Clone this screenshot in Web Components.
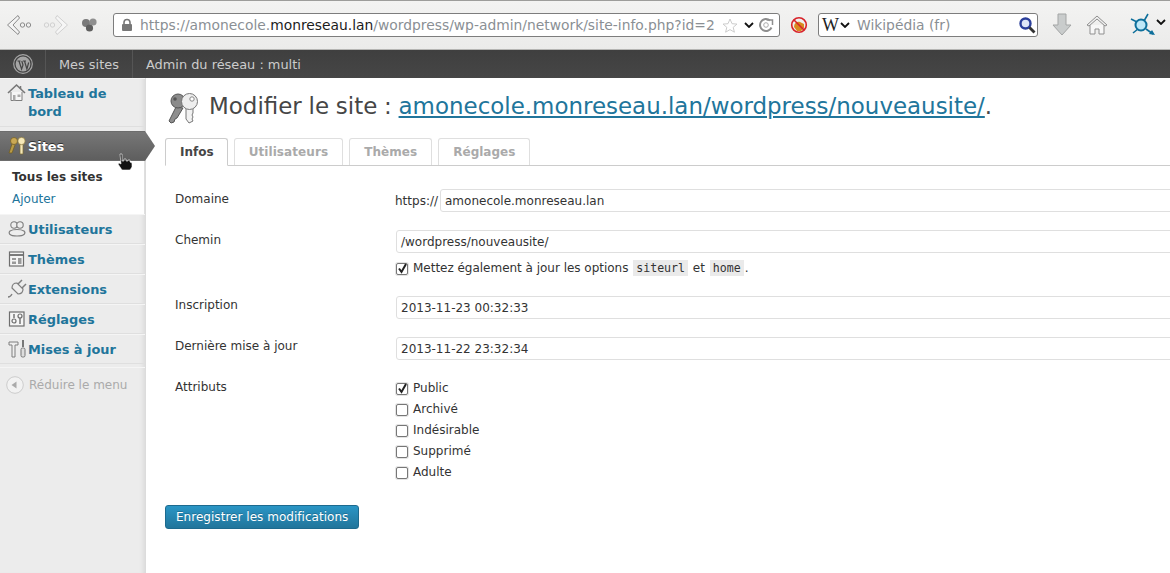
<!DOCTYPE html>
<html lang="fr">
<head>
<meta charset="utf-8">
<title>Modifier le site</title>
<style>
  html, body { margin: 0; height: 573px; overflow: hidden; background: #fff; }
  body { font-family: "DejaVu Sans", sans-serif; font-size: 12px; color: #333; display: flex; flex-direction: column; }
</style>
</head>
<body>
<browser-toolbar></browser-toolbar>
<wp-adminbar></wp-adminbar>
<wp-shell>
  <wp-sidebar slot="side"></wp-sidebar>
  <site-form></site-form>
</wp-shell>

<script>
class BrowserToolbar extends HTMLElement {
    constructor() {
        super();
        this.attachShadow({mode: 'open'});
    }

    connectedCallback() {
        this.shadowRoot.innerHTML = `
        <style>
            :host {
                display: flex;
                align-items: center;
                height: 50px;
                flex: none;
                box-sizing: border-box;
                border-top: 1px solid #9d9d9b;
                border-bottom: 1px solid #b5b5b3;
                background: linear-gradient(#f3f3f2, #ebebea);
                padding: 0 0 0 6px;
                font-family: "DejaVu Sans", sans-serif;
                overflow: hidden;
                position: relative;
            }
            /* onglet actif, au dessus de la barre */
            :host::before {
                content: "";
                position: absolute;
                left: 990px;
                top: -1px;
                width: 98px;
                height: 1px;
                background: #f3f3f2;
            }
            svg { display: block; flex: none; }
            .url, .search {
                display: flex;
                align-items: center;
                height: 24px;
                box-sizing: border-box;
                background: #fff;
                border: 1px solid #7d7d7d;
                border-radius: 3px;
                font-size: 13.850px;
                white-space: nowrap;
                overflow: hidden;
                flex: none;
            }
            .url { width: 667px; margin-left: 15px; padding-left: 7px; color: #8a8f94; }
            .url b { font-weight: normal; color: #1c1c1c; }
            .url span.t { margin-left: 7px; }
            .url .end { margin-left: auto; display: flex; align-items: center; gap: 4px; padding-right: 5px; background: #fff; }
            .search { width: 220px; margin-left: 10px; padding-left: 3px; color: #8a8f94; }
            .search .w { font: 18px "Liberation Serif", serif; color: #222; width: 18px; }
            .search .t { margin-left: 7px; }
            .search svg:last-child { margin-left: auto; margin-right: 1px; }
        </style>
        <svg width="28" height="26" viewBox="0 0 28 26" fill="none"><path d="M12 3.500 1.500 13 12 22.500l1.500-2.500L7 13l6.500-7z" fill="#f4f4f4" stroke="#8b8b8b"/><circle cx="16.500" cy="13" r="2.200" stroke="#8b8b8b"/><circle cx="22.500" cy="13" r="2.200" stroke="#8b8b8b"/></svg>
        <svg width="28" height="26" viewBox="0 0 28 26" fill="none" style="margin-left:9px"><path d="M14 3.500 24.500 13 14 22.500 12.500 20 19 13 12.500 6z" fill="#f6f6f6" stroke="#d0d0d0"/><circle cx="9.500" cy="13" r="2.200" stroke="#d0d0d0"/><circle cx="3.500" cy="13" r="2.200" stroke="#d0d0d0"/></svg>
        <svg width="18" height="18" viewBox="0 0 18 18" style="margin-left:9px"><circle cx="6" cy="7" r="4" fill="#7a7a7a"/><circle cx="13" cy="6" r="3.600" fill="#8f8f8f"/><circle cx="9.500" cy="12" r="3.600" fill="#5f5f5f"/></svg>
        <div class="url">
            <svg width="12" height="14" viewBox="0 0 12 14"><path d="M3 6V4.500a3 3 0 0 1 6 0V6" fill="none" stroke="#777" stroke-width="1.600"/><rect x="1" y="6" width="10" height="7" rx="1" fill="#777"/></svg>
            <span class="t">https://amonecole.<b>monreseau.lan</b>/wordpress/wp-admin/network/site-info.php?id=2</span>
            <span class="end">
                <svg width="16" height="15" viewBox="0 0 16 15" style="margin-right:2px"><path d="M8 1l2 4.700 5 .4-3.800 3.200 1.200 4.900L8 11.600 3.600 14.200l1.200-4.900L1 6.100l5-.4z" fill="#fff" stroke="#ccc"/></svg>
                <svg width="10" height="6" viewBox="0 0 10 6"><path d="M1 1l4 4 4-4" fill="none" stroke="#111" stroke-width="1.800"/></svg>
                <svg width="16" height="16" viewBox="0 0 16 16" fill="none"><path d="M13.500 10.500a6 6 0 1 1-1.500-7" stroke="#8e8e8e" stroke-width="2"/><path d="M8.500 3h6v5" stroke="#8e8e8e" stroke-width="1.500"/><circle cx="8" cy="8" r="2.300" stroke="#aaa"/></svg>
            </span>
        </div>
        <svg width="18" height="18" viewBox="0 0 18 18" style="margin-left:10px"><path d="M4 11c0-4 3-6 6-5l4 2 0 4-3 3H7z" fill="#d98a20"/><circle cx="9" cy="9" r="7.300" fill="none" stroke="#d8232a" stroke-width="1.600"/><path d="M4 4l10 10" stroke="#d8232a" stroke-width="1.600"/></svg>
        <div class="search">
            <span class="w">W</span>
            <svg width="10" height="6" viewBox="0 0 10 6"><path d="M1 1l4 4 4-4" fill="none" stroke="#111" stroke-width="1.800"/></svg>
            <span class="t">Wikipédia (fr)</span>
            <svg width="18" height="18" viewBox="0 0 18 18"><circle cx="7.500" cy="7.500" r="5" fill="#dfe6f7" stroke="#2b3f9a" stroke-width="2.400"/><path d="M11.500 11.500l5 5" stroke="#333" stroke-width="2.800"/></svg>
        </div>
        <svg width="20" height="24" viewBox="0 0 20 24" style="margin-left:14px"><path d="M6 1h8v11h5L10 22 1 12h5z" fill="#c9cccc" stroke="#a3a5a5"/></svg>
        <svg width="22" height="22" viewBox="0 0 22 22" fill="none" style="margin-left:14px"><path d="M1 11 11 2l10 9-2 1-8-7-8 7z" fill="#eee" stroke="#8f8f8f"/><path d="M4 11v9h5v-5h4v5h5v-9" fill="#f7f7f7" stroke="#8f8f8f"/></svg>
        <svg width="26" height="24" viewBox="0 0 26 24" fill="none" style="margin-left:22px"><path d="M1 6l6 3M3 20l5-4M18 1l-4 7M23 21l-7-5" stroke="#0d6f9b" stroke-width="1.600"/><circle cx="11" cy="12" r="5.500" fill="#bfe8f8" stroke="#0d6f9b" stroke-width="2"/><path d="M25 22l-6-1 3-4z" fill="#0d6f9b"/></svg>
        <svg width="10" height="6" viewBox="0 0 10 6" style="margin:0 0 6px 0"><path d="M1 1l4 4 4-4" fill="none" stroke="#111" stroke-width="1.800"/></svg>
        `;
    }
}

class WpAdminbar extends HTMLElement {
    constructor() {
        super();
        this.attachShadow({mode: 'open'});
    }

    connectedCallback() {
        this.shadowRoot.innerHTML = `
        <style>
            :host {
                display: flex;
                height: 28px;
                flex: none;
                background: linear-gradient(#3f3f3f, #464646);
                color: #ccc;
                font: 12.900px/29px "DejaVu Sans", sans-serif;
            }
            div { padding: 0 13px; border-right: 1px solid #555; box-sizing: border-box; }
            .logo { width: 46px; padding: 4px 0 0 13px; }
            .last { border: 0; }
            svg { display: block; }
        </style>
        <div class="logo">
            <svg width="20" height="20" viewBox="0 0 20 20" fill="none"><circle cx="10" cy="10" r="9.300" stroke="#a5a5a5" stroke-width="1.200"/><circle cx="10" cy="10" r="7.400" fill="#a5a5a5"/><path d="M4.500 7h3M6 7l2.600 8L10 11 8.800 7M10 7h3M11.500 7l2.400 8 1.800-6.500" stroke="#444" stroke-width="1.200"/></svg>
        </div>
        <div style="width:87px">Mes sites</div>
        <div class="last">Admin du réseau : multi</div>
        `;
    }
}

class WpShell extends HTMLElement {
    constructor() {
        super();
        this.attachShadow({mode: 'open'});
    }

    connectedCallback() {
        this.shadowRoot.innerHTML = `
        <style>
            :host { display: flex; flex: 1; min-height: 0; }
            .side { display: block; flex: none; width: 146px; }
            .main { display: block; flex: 1; min-width: 0; overflow: hidden; }
        </style>
        <div class="side"><slot name="side"></slot></div>
        <div class="main"><slot></slot></div>
        `;
    }
}

const ICONS = {
    home: '<path d="M1 10 9.500 2 18 10" fill="none" stroke="#777" stroke-width="1.600"/><path d="M13.500 3v3" stroke="#777" stroke-width="1.500"/><path d="M4 9v8.500h11V9" fill="#f6f6f6" stroke="#7e7e7e"/><path d="M6 12h2.500v5.500H6zM10.500 11.500h3V14h-3z" fill="#aaa"/>',
    keys: '<path d="M5 8 2 17h3l3-8" fill="#b89a45" stroke="#6e5a20" stroke-width=".7"/><circle cx="7" cy="5" r="3.500" fill="#caa955" stroke="#6e5a20" stroke-width=".7"/><path d="M13 8v10h3V8" fill="#f5e8b8" stroke="#7d6a30" stroke-width=".7"/><circle cx="14.500" cy="5" r="3.700" fill="#f5e8b8" stroke="#7d6a30" stroke-width=".7"/>',
    users: '<circle cx="7" cy="6" r="3.200" fill="#eee" stroke="#7e7e7e" stroke-width="1.100"/><circle cx="13" cy="6" r="3.200" fill="#eee" stroke="#7e7e7e" stroke-width="1.100"/><path d="M3 12c3-2 11-2 14 0 2 2 1 5-7 5s-9-3-7-5z" fill="#eee" stroke="#7e7e7e" stroke-width="1.100"/>',
    themes: '<rect x="2.500" y="3" width="14" height="14" fill="#f4f4f4" stroke="#6e6e6e" stroke-width="1.200"/><path d="M2.500 6h14" stroke="#6e6e6e" stroke-width="1.800"/><path d="M5 9h4v2H5zM5 12.500h4v2.500H5zM11 9h3.500v6H11z" fill="#999"/>',
    plugins: '<path d="M1 18c2 0 3-1 4-3" fill="none" stroke="#7e7e7e" stroke-width="1.300"/><path d="M5 9l6 6c3 0 5-2 5-5l-6-6C7 4 5 6 5 9z" fill="#eee" stroke="#7e7e7e" stroke-width="1.200"/><path d="M11 5l4-4M15 9l4-4" stroke="#7e7e7e" stroke-width="1.500"/>',
    settings: '<rect x="2.500" y="3" width="14.500" height="14" fill="#f6f6f6" stroke="#6e6e6e" stroke-width="1.200"/><path d="M7 5v4M13 9v6" stroke="#6e6e6e" stroke-width="1.400"/><circle cx="7" cy="12" r="2" fill="none" stroke="#6e6e6e" stroke-width="1.200"/><circle cx="13" cy="7" r="2" fill="none" stroke="#6e6e6e" stroke-width="1.200"/>',
    tools: '<path d="M2 3h9v3H8v12H5V6H2z" fill="#eee" stroke="#7e7e7e"/><path d="M16 1v7" stroke="#777" stroke-width="2"/><rect x="14" y="9" width="4" height="9" rx="1.500" fill="#ddd" stroke="#777"/>'
};

class WpMenuItem extends HTMLElement {
    constructor() {
        super();
        this.attachShadow({mode: 'open'});
    }

    connectedCallback() {
        const icon = this.getAttribute('icon');
        this.shadowRoot.innerHTML = `
        <style>
            :host {
                display: flex;
                box-sizing: border-box;
                min-height: 30px;
                padding: 6px 4px 0 7px;
                border-top: 1px solid #f5f5f5;
                border-bottom: 1px solid #dfdfdf;
                color: #21759b;
                font: bold 12.900px/18px "DejaVu Sans", sans-serif;
                position: relative;
            }
            :host([current]) {
                background: linear-gradient(#777, #5e5e5e);
                color: #fff;
                border-color: #6d6d6d;
                text-shadow: 0 -1px 0 #333;
            }
            :host([current])::after {
                content: "";
                position: absolute;
                left: 100%;
                top: -1px;
                bottom: -1px;
                width: 10px;
                background: linear-gradient(#777, #5e5e5e);
                clip-path: polygon(0 0, 100% 50%, 0 100%);
            }
            svg { flex: none; width: 20px; height: 20px; margin: -2px 1px 0 0; }
        </style>
        <svg viewBox="0 0 20 20">${ICONS[icon]}</svg>
        <span><slot></slot></span>
        `;
    }
}

class WpSidebar extends HTMLElement {
    constructor() {
        super();
        this.attachShadow({mode: 'open'});
    }

    connectedCallback() {
        this.shadowRoot.innerHTML = `
        <style>
            :host {
                display: block;
                height: 495px;
                width: 146px;
                box-sizing: border-box;
                background: #ececec;
                border-right: 1px solid #dcdcdc;
                box-shadow: inset -5px 0 5px -4px #d5d5d5;
                font-family: "DejaVu Sans", sans-serif;
            }
            .dash { min-height: 49px; margin-bottom: 4px; padding-top: 6px; }
            .sub { background: #fff; padding: 5px 0 4px 12px; font-size: 12px; line-height: 22px; color: #21759b; margin-right: 1px; position: relative; }
            .sub b { display: block; color: #333; }
            .collapse {
                display: flex;
                align-items: center;
                gap: 5px;
                margin-top: 3px;
                border-top: 1px solid #f5f5f5;
                padding: 8px 0 0 6px;
                color: #aaa;
                font-size: 12px;
            }
            .cursor { position: absolute; left: 117px; top: -8px; }
        </style>
        <wp-menu-item icon="home" class="dash">Tableau de bord</wp-menu-item>
        <wp-menu-item icon="keys" current>Sites</wp-menu-item>
        <div class="sub">
            <svg class="cursor" width="16" height="18" viewBox="0 0 16 18"><path d="M3 1h2v7h2V6h2v2h2V7h2v2l2 1v4l-2 3H5L1 11l1-1 2 1z" fill="#111" stroke="#fff" stroke-width=".6"/></svg>
            <b>Tous les sites</b>Ajouter
        </div>
        <wp-menu-item icon="users">Utilisateurs</wp-menu-item>
        <wp-menu-item icon="themes">Thèmes</wp-menu-item>
        <wp-menu-item icon="plugins">Extensions</wp-menu-item>
        <wp-menu-item icon="settings">Réglages</wp-menu-item>
        <wp-menu-item icon="tools">Mises à jour</wp-menu-item>
        <div class="collapse">
            <svg width="18" height="18" viewBox="0 0 18 18"><circle cx="9" cy="9" r="8.300" fill="#f2f2f2" stroke="#ccc"/><path d="M5.500 9l5-3.500v7z" fill="#aaa"/></svg>
            Réduire le menu
        </div>
        `;
    }
}

class FormRow extends HTMLElement {
    constructor() {
        super();
        this.attachShadow({mode: 'open'});
    }

    connectedCallback() {
        this.shadowRoot.innerHTML = `
        <style>
            :host { display: flex; padding: 0 0 18px 10px; font: 12px/16px "DejaVu Sans", sans-serif; color: #333; }
            .label { flex: none; width: 220px; padding-top: 2px; }
            :host([tight]) .label { padding-top: 1px; }
            .field { flex: none; width: 800px; }
        </style>
        <div class="label"><slot name="label"></slot></div>
        <div class="field"><slot></slot></div>
        `;
    }
}

class TextBox extends HTMLElement {
    constructor() {
        super();
        this.attachShadow({mode: 'open'});
    }

    connectedCallback() {
        this.shadowRoot.innerHTML = `
        <style>
            :host {
                display: block;
                box-sizing: border-box;
                height: 23px;
                width: 800px;
                flex: none;
                margin-left: 1px;
                border: 1px solid #dfdfdf;
                border-radius: 3px;
                padding: 0 4px;
                background: #fff;
                font: 12px/22px "DejaVu Sans", sans-serif;
                color: #333;
                white-space: nowrap;
            }
        </style>
        <slot></slot>
        `;
    }
}

class CheckLine extends HTMLElement {
    constructor() {
        super();
        this.attachShadow({mode: 'open'});
    }

    connectedCallback() {
        const on = this.hasAttribute('checked');
        this.shadowRoot.innerHTML = `
        <style>
            :host { display: flex; align-items: center; height: 21px; gap: 5px; margin-left: 1px; font: 12px/21px "DejaVu Sans", sans-serif; color: #333; white-space: pre; }
            .box { flex: none; width: 12px; height: 12px; box-sizing: border-box; border: 1px solid #777; border-radius: 2px; background: #fff; box-shadow: 0 0 0 1px #e4e4e4; }
            svg { display: block; margin: -2px 0 0 -1px; }
        </style>
        <div class="box">${on ? '<svg width="13" height="13" viewBox="0 0 13 13"><path d="M3 6.500l2.500 3.500L10 2" fill="none" stroke="#222" stroke-width="2"/></svg>' : ''}</div>
        <span><slot></slot></span>
        `;
    }
}

class SiteForm extends HTMLElement {
    constructor() {
        super();
        this.attachShadow({mode: 'open'});
    }

    connectedCallback() {
        this.shadowRoot.innerHTML = `
        <style>
            :host { display: block; padding-left: 19px; font-family: "DejaVu Sans", sans-serif; color: #333; overflow: hidden; }
            .head { display: flex; align-items: center; gap: 10px; height: 60px; box-sizing: border-box; padding: 0 0 4px 3px; font-size: 22.950px; word-spacing: -.5px; color: #464646; white-space: nowrap; }
            .head svg { flex: none; margin-top: 5px; }
            a { color: #21759b; text-decoration: underline; }
            .tabs { display: flex; gap: 6px; height: 28px; box-sizing: border-box; border-bottom: 1px solid #ccc; font: bold 12px/26px "DejaVu Sans", sans-serif; color: #aaa; }
            .tabs div { height: 27px; box-sizing: border-box; border: 1px solid #dfdfdf; border-bottom: 0; border-radius: 3px 3px 0 0; padding: 0 14px; letter-spacing: .08px; }
            .tabs .on { background: #fff; border-color: #ccc; color: #464646; height: 28px; border-bottom: 1px solid #fff; padding-right: 13px; letter-spacing: 0; }
            .tabs .end { letter-spacing: 0; }
            .rows { padding-top: 23px; }
            .inline { display: flex; align-items: center; }
            .inline text-box { margin-left: 2px; }
            code { font: 11.600px/16px "DejaVu Sans Mono", monospace; background: #eaeaea; padding: 1px 3px; margin: 0 1px; letter-spacing: 0; }
            .mettez { margin-top: 5px; margin-bottom: -1px; letter-spacing: -.02px; }
            .btn {
                display: inline-block;
                margin-top: 4px;
                height: 24px;
                box-sizing: border-box;
                padding: 0 10px;
                border: 1px solid #1d6a8e;
                border-radius: 3px;
                background: linear-gradient(#2a95c5, #21759b);
                color: #fff;
                font: 12px/22px "DejaVu Sans", sans-serif;
                letter-spacing: .03px;
                text-shadow: 0 -1px 0 rgba(0,0,0,.2);
            }
        </style>
        <div class="head">
            <svg width="31" height="31" viewBox="0 0 31 31">
                <path d="M8 14 1 28l2 2 3-1 1-3 2-1 6-10z" fill="#8e8e8e" stroke="#555"/>
                <circle cx="10" cy="8" r="7" fill="#8b8b8b" stroke="#555"/>
                <circle cx="7" cy="6" r="1.800" fill="#555"/>
                <path d="M18 14v12l3 4 4-2-1-2 1-2-1-2 1-2v-6z" fill="#f2f2f2" stroke="#777"/>
                <circle cx="21.500" cy="8.500" r="8" fill="#eee" stroke="#777"/>
                <circle cx="24" cy="6" r="2.200" fill="#fff" stroke="#888"/>
            </svg>
            <span>Modifier le site : <a>amonecole.monreseau.lan/wordpress/nouveausite/</a>.</span>
        </div>
        <div class="tabs">
            <div class="on">Infos</div>
            <div>Utilisateurs</div>
            <div>Thèmes</div>
            <div class="end">Réglages</div>
        </div>
        <div class="rows">
            <form-row>
                <span slot="label">Domaine</span>
                <div class="inline">https://<text-box>amonecole.monreseau.lan</text-box></div>
            </form-row>
            <form-row>
                <span slot="label">Chemin</span>
                <text-box>/wordpress/nouveausite/</text-box>
                <check-line checked class="mettez">Mettez également à jour les options <code>siteurl</code> et <code>home</code>.</check-line>
            </form-row>
            <form-row tight>
                <span slot="label">Inscription</span>
                <text-box>2013-11-23 00:32:33</text-box>
            </form-row>
            <form-row tight>
                <span slot="label">Dernière mise à jour</span>
                <text-box>2013-11-22 23:32:34</text-box>
            </form-row>
            <form-row tight>
                <span slot="label">Attributs</span>
                <check-line checked>Public</check-line>
                <check-line>Archivé</check-line>
                <check-line>Indésirable</check-line>
                <check-line>Supprimé</check-line>
                <check-line>Adulte</check-line>
            </form-row>
        </div>
        <div class="btn">Enregistrer les modifications</div>
        `;
    }
}

window.customElements.define('browser-toolbar', BrowserToolbar);
window.customElements.define('wp-adminbar', WpAdminbar);
window.customElements.define('wp-shell', WpShell);
window.customElements.define('wp-menu-item', WpMenuItem);
window.customElements.define('wp-sidebar', WpSidebar);
window.customElements.define('form-row', FormRow);
window.customElements.define('text-box', TextBox);
window.customElements.define('check-line', CheckLine);
window.customElements.define('site-form', SiteForm);
</script>
</body>
</html>
